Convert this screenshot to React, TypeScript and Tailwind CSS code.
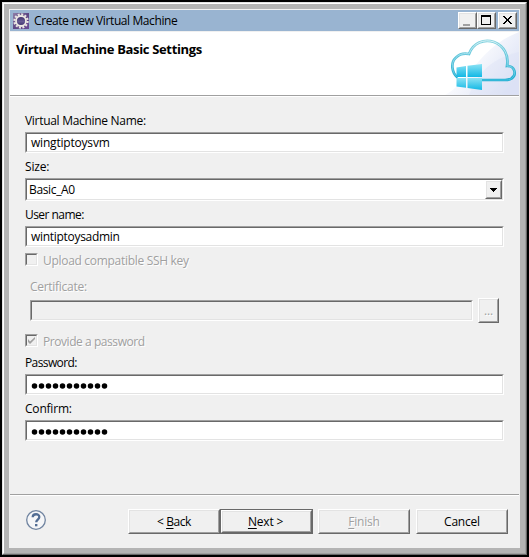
import type { ReactNode } from "react";

const SUNKEN =
  "border border-t-[#a0a0a0] border-l-[#a0a0a0] border-r-white border-b-white";
const SUNKEN_INNER =
  "flex h-full w-full items-center border border-t-[#696969] border-l-[#696969] border-r-[#e3e3e3] border-b-[#e3e3e3]";
const RAISED =
  "border border-t-white border-l-white border-r-[#696969] border-b-[#696969]";
const RAISED_INNER =
  "flex h-full w-full items-center justify-center border border-t-[#e3e3e3] border-l-[#e3e3e3] border-r-[#a0a0a0] border-b-[#a0a0a0] bg-[#f0f0f0]";
const DISABLED = "text-[#a0a0a0] [text-shadow:1px_1px_0_#fff]";

function Label({ children, className = "" }: { children: ReactNode; className?: string }) {
  return <div className={`flex h-4 items-center pt-[2px] ${className}`}>{children}</div>;
}

function Field({ children, className = "" }: { children?: ReactNode; className?: string }) {
  return (
    <div className={`h-[21px] ${SUNKEN} ${className}`}>
      <div className={`${SUNKEN_INNER} pl-1`}>{children}</div>
    </div>
  );
}

function Dots() {
  return (
    <svg width="78" height="6" viewBox="0 0 78 6" className="mt-[2px]">
      {Array.from({ length: 11 }, (_, i) => (
        <circle key={i} cx={3.5 + i * 7} cy="3" r="2.750" />
      ))}
    </svg>
  );
}

function Check({ checked, className = "", children }: { checked?: boolean; className?: string; children: ReactNode }) {
  return (
    <div className={`flex h-[13px] items-center ${DISABLED} ${className}`}>
      <div className={`size-[13px] ${SUNKEN}`}>
        <div className={SUNKEN_INNER}>
          {checked && (
            <svg width="9" height="9" viewBox="0 0 9 9" className="shrink-0">
              <path d="M1 3v3l2 2 5-5V1L3 5.500Z" fill="#a0a0a0" />
            </svg>
          )}
        </div>
      </div>
      <span className="ml-[5px] pt-[2px]">{children}</span>
    </div>
  );
}

function WindowButton({ children }: { children: ReactNode }) {
  return (
    <div className={`h-[17px] w-[19px] ${RAISED}`}>
      <div className={RAISED_INNER}>
        <svg width="15" height="13" viewBox="0 0 15 13" className="shrink-0" shapeRendering="crispEdges">
          {children}
        </svg>
      </div>
    </div>
  );
}

function Button({ children, className = "" }: { children: ReactNode; className?: string }) {
  return (
    <div className={`h-[25px] w-[92px] ${RAISED} ${className}`}>
      <div className={RAISED_INNER}>
        <span className="whitespace-pre">{children}</span>
      </div>
    </div>
  );
}

function Accel({ children }: { children: ReactNode }) {
  return <span className="underline decoration-1 underline-offset-2">{children}</span>;
}

function EclipseIcon() {
  return (
    <svg width="16" height="16" viewBox="0 0 16 16">
      <defs>
        <linearGradient id="tile" x1="0" y1="0" x2="1" y2="1">
          <stop offset="0" stopColor="#8f80a8" />
          <stop offset="0.5" stopColor="#5d4683" />
          <stop offset="1" stopColor="#6b4a94" />
        </linearGradient>
        <linearGradient id="orb" x1="0" y1="0" x2="0" y2="1">
          <stop offset="0" stopColor="#3a2c66" />
          <stop offset="0.55" stopColor="#665a92" />
          <stop offset="1" stopColor="#3a2c66" />
        </linearGradient>
      </defs>
      <rect width="16" height="16" fill="url(#tile)" />
      <circle cx="8" cy="8" r="6.600" fill="none" stroke="#e9e6e3" strokeWidth="2.200" strokeDasharray="2 1.456" />
      <circle cx="8" cy="8" r="5" fill="url(#orb)" stroke="#eeeae5" strokeWidth="1.800" />
    </svg>
  );
}

const CLOUD =
  "M12.500 45.500C7 41 5 31 11 25.500c3.500-3.500 8-4.500 13-3.500C28 11 39 6.500 49 10c10 4 15 13 13 24 8-.5 10 9 4.500 12.500-2 1.500-4 1.500-6.500 1.500H37";

function CloudBanner() {
  return (
    <svg width="74" height="63" viewBox="0 0 74 63">
      <defs>
        <linearGradient id="sky" x1="0.1" y1="0.1" x2="1" y2="0.7">
          <stop offset="0.25" stopColor="#fff" />
          <stop offset="1" stopColor="#dce2f5" />
        </linearGradient>
        <linearGradient id="rim" x1="0" y1="0" x2="0" y2="1">
          <stop offset="0" stopColor="#86d3df" />
          <stop offset="1" stopColor="#1eabd0" />
        </linearGradient>
        <linearGradient id="core" x1="0" y1="0" x2="0" y2="1">
          <stop offset="0" stopColor="#e8f8fa" />
          <stop offset="1" stopColor="#4cc6e2" />
        </linearGradient>
        <linearGradient id="pane" x1="0" y1="0" x2="0" y2="1">
          <stop offset="0" stopColor="#8be2f4" />
          <stop offset="1" stopColor="#12b8e5" />
        </linearGradient>
      </defs>
      <path d="M0 63C25 50 33 16 74 0v63Z" fill="url(#sky)" />
      <path d="M24 63C33 40 47 26 74 20v43Z" fill="#dbe2f5" opacity=".4" />
      <path d={CLOUD} fill="none" stroke="url(#rim)" strokeWidth="2.700" />
      <path d={CLOUD} fill="none" stroke="url(#core)" strokeWidth=".9" />
      <path d="M11.500 35.500 21 34v11h-9.500ZM22.500 33.700 37 32v13H22.500Z" fill="url(#pane)" />
      <path d="M11.500 46H21v9.700l-9.500-1.200ZM22.500 46H37v12l-14.500-2Z" fill="url(#pane)" />
    </svg>
  );
}

export default function App() {
  return (
    <div className="h-[557px] w-[529px] overflow-hidden bg-black p-[2px] font-['Open_Sans','Noto_Sans',sans-serif] text-[12px] leading-4 tracking-[-0.2px] text-black">
      <div className="h-[553px] w-[525px] border border-t-[#e3e3e3] border-l-[#e3e3e3] border-r-[#696969] border-b-[#696969]">
        <div className="h-full border border-t-white border-l-white border-r-[#a0a0a0] border-b-[#a0a0a0] bg-[#b4b4b4] p-[5px]">
          <div className="flex h-full flex-col border border-[#f0f0f0] bg-[#f0f0f0]">
            <div className="flex h-[21px] shrink-0 items-center bg-[#99b4d1] pr-[2px] pl-[3px]">
              <EclipseIcon />
              <span className="ml-[5px] flex-1 pt-px tracking-[-0.4px]">Create new Virtual Machine</span>
              <WindowButton><path d="M3 10h7v2H3z" fill="#a0a0a0" /></WindowButton>
              <WindowButton><path d="M2 1h10v10H2zM3 3v7h8V3z" fill="#000" fillRule="evenodd" /></WindowButton>
              <div className="w-[2px]" />
              <WindowButton>
                <path d="M3 2h2v1h1v1h1v1h1V4h1V3h1V2h2v1h-1v1h-1v1H9v2h1v1h1v1h1v1h-2V9H9V8H8V7H7v1H6v1H5v1H3V9h1V8h1V7h1V5H5V4H4V3H3z" />
              </WindowButton>
            </div>
            <div className="mt-px flex h-[63px] shrink-0 justify-between bg-white pl-[6px]">
              <h1 className="mt-[9px] text-[13px] font-bold tracking-[-0.34px]">Virtual Machine Basic Settings</h1>
              <CloudBanner />
            </div>
            <div className="h-[2px] shrink-0 border-t border-t-[#a0a0a0] bg-white" />
            <div className="flex flex-1 flex-col pt-[15px] pr-[15px] pl-[15px]">
              <Label className="tracking-[-0.3px]">Virtual Machine Name:</Label>
              <Field className="mt-[4px] bg-white">wingtiptoysvm</Field>
              <Label className="mt-[5px]">Size:</Label>
              <div className={`mt-[4px] h-[23px] bg-white ${SUNKEN}`}>
                <div className={`${SUNKEN_INNER} justify-between pl-[2px]`}>
                  <span className="tracking-[-0.35px]">Basic_A0</span>
                  <div className={`h-[19px] w-[17px] ${RAISED}`}>
                    <div className={RAISED_INNER}>
                      <svg width="7" height="4" viewBox="0 0 7 4" shapeRendering="crispEdges">
                        <path d="M0 0h7v1H6v1H5v1H4v1H3V3H2V2H1V1H0z" />
                      </svg>
                    </div>
                  </div>
                </div>
              </div>
              <Label className="mt-[5px] tracking-[-0.55px]">User name:</Label>
              <Field className="mt-[4px] bg-white tracking-[-0.3px]">wintiptoysadmin</Field>
              <div className="h-[6px]" />
              <Check className="tracking-[-0.3px]">Upload compatible SSH key</Check>
              <Label className={`mt-[12px] ml-[5px] tracking-[-0.28px] ${DISABLED}`}>Certificate:</Label>
              <div className="mt-[4px] ml-[5px] flex h-[25px] items-center gap-[5px]">
                <Field className="w-[443px]" />
                <div className={`h-[25px] w-[21px] ${RAISED}`}>
                  <div className={`${RAISED_INNER} ${DISABLED}`}>...</div>
                </div>
              </div>
              <div className="h-[11px]" />
              <Check checked className="tracking-[-0.44px]">Provide a password</Check>
              <Label className="mt-[7px] tracking-[-0.6px]">Password:</Label>
              <Field className="mt-[4px] bg-white"><Dots /></Field>
              <Label className="mt-[5px]">Confirm:</Label>
              <Field className="mt-[4px] bg-white"><Dots /></Field>
            </div>
            <div className="h-[2px] shrink-0 border-t border-t-[#a0a0a0] bg-white" />
            <div className="flex h-[51px] shrink-0 items-start pt-[13px] pl-[16px]">
              <svg width="20" height="20" viewBox="0 0 20 20" className="mt-px mr-[82px]">
                <circle cx="10" cy="10" r="9.300" fill="#f5f6f8" stroke="#7084a0" strokeWidth="1.300" />
                <path d="M6.700 7.300C6.700 3.300 13.300 3.300 13.300 7c0 2.500-3.100 2.600-3.100 5.200" fill="none" stroke="#526d94" strokeWidth="2.300" />
                <path d="M9 14h2.400v2.300H9z" fill="#526d94" />
              </svg>
              <Button className="tracking-[-0.4px]">{"< "}<Accel>B</Accel>ack</Button>
              <div className="h-[25px] w-[93px] border border-[#696969]">
                <Button className="h-full w-full"><span className="mr-[2px]"><Accel>N</Accel>{"ext >"}</span></Button>
              </div>
              <Button className={`ml-[5px] ${DISABLED}`}><Accel>F</Accel>inish</Button>
              <Button className="ml-[6px]">Cancel</Button>
            </div>
          </div>
        </div>
      </div>
    </div>
  );
}
